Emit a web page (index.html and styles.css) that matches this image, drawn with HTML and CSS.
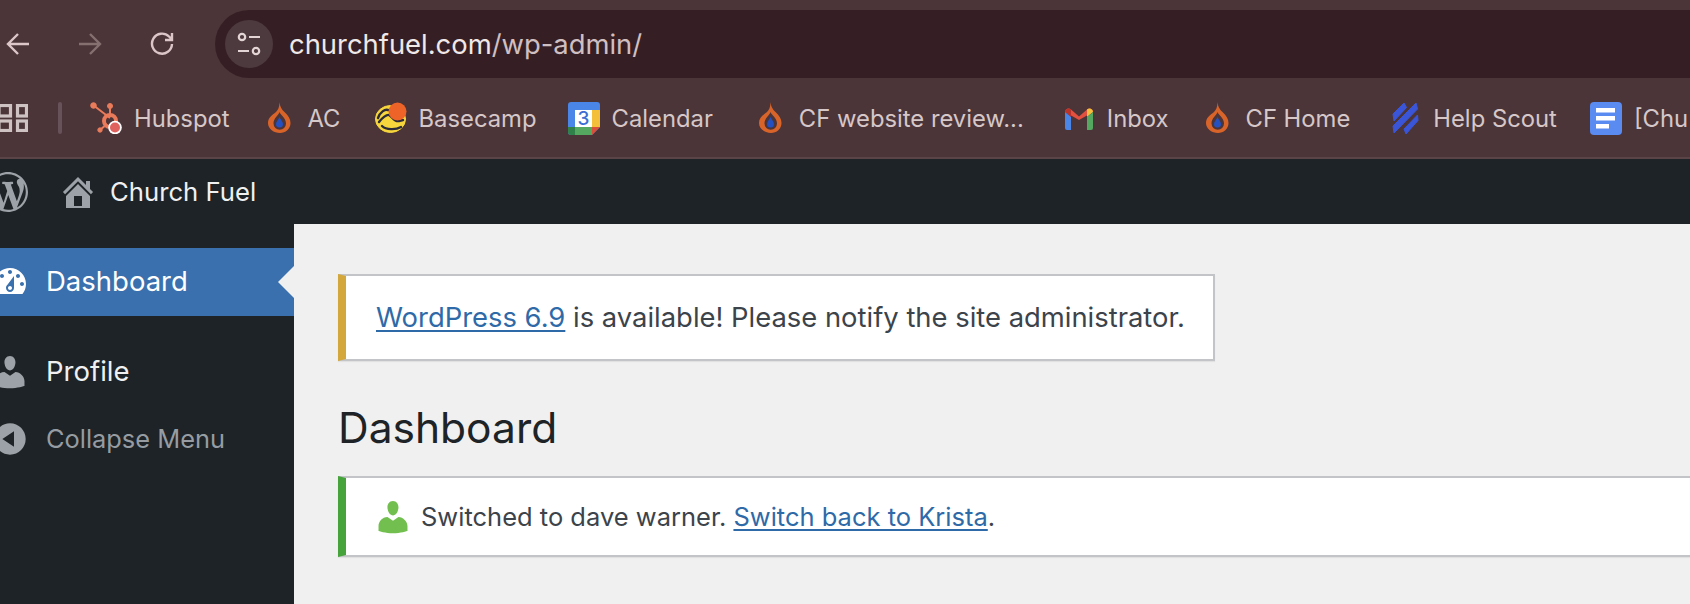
FILE: index.html
```html
<!DOCTYPE html>
<html lang="en">
<head>
  <meta charset="UTF-8" />
  <title>Dashboard - Church Fuel</title>
  <link rel="stylesheet" href="styles.css">
</head>
<body>
  <header class="chrome">
    <div class="toolbar">
      <svg class="nav-icon" width="24" height="24" viewBox="0 0 24 24"><path d="M23 12H2M12 2 2 12l10 10"/></svg>
      <svg class="nav-icon nav-off" width="24" height="24" viewBox="0 0 24 24"><path d="M1 12h21M12 2l10 10-10 10"/></svg>
      <svg class="nav-icon" width="26" height="24" viewBox="0 0 26 24"><path d="M22 12a10 10 0 1 1-3-7.500L22 7.500M22 1v7h-7"/></svg>
      <div class="omnibox">
        <span class="site-chip">
          <svg width="24" height="24" viewBox="0 0 24 24"><circle cx="5" cy="5" r="3.200"/><path d="M12 5h11M1 19h11"/><circle cx="19" cy="19" r="3.200"/></svg>
        </span>
        <span class="url"><span class="url-host">churchfuel.com</span>/wp-admin/</span>
      </div>
    </div>
    <nav class="bookmarks">
      <svg class="apps" width="28" height="28" viewBox="0 0 28 28"><rect x="-1" y="1.500" width="11.500" height="10.500"/><rect x="17.500" y="1.500" width="9" height="10.500"/><rect x="-1" y="17" width="11.500" height="9.500"/><rect x="17.500" y="17" width="9" height="9.500"/></svg>
      <span class="divider"></span>
      <a class="bm">
        <svg width="32" height="32" viewBox="0 0 32 32"><g fill="#e97b5a" stroke="#e97b5a"><path d="M3 3 20 16M20 4v10M10 28l7-6" stroke-width="2" fill="none"/><circle cx="3.500" cy="3.500" r="2.800"/><circle cx="20" cy="4" r="2.500"/><circle cx="10" cy="28" r="2.200"/><circle cx="20" cy="19" r="6" fill="none" stroke-width="4"/></g><circle cx="25" cy="25.500" r="6.800" fill="#fff"/><circle cx="25" cy="25.500" r="5" fill="#e0625f"/></svg>
        Hubspot
      </a>
      <a class="bm">
        <svg class="flame" width="32" height="32" viewBox="0 0 32 32"><use href="#flame"/></svg>
        AC
      </a>
      <a class="bm">
        <svg width="32" height="32" viewBox="0 0 32 32"><ellipse cx="15.500" cy="17" rx="15" ry="13.500" fill="#f6d63c" stroke="#f6d63c"/><path d="M3 16c2-6 7-9 10-8M4 20c3-4 8-8 10-7 3 1 5 7 10 6l4-1M7 24c4 4 14 4 19 1" fill="none" stroke="#2b2b3a" stroke-width="2.400" stroke-linecap="round"/><circle cx="22.500" cy="9.500" r="9" fill="#ee6428"/></svg>
        Basecamp
      </a>
      <a class="bm bm-tight">
        <svg width="32" height="33" viewBox="0 0 32 33"><path d="M3 0h26a3 3 0 0 1 3 3v22l-8 8H3a3 3 0 0 1-3-3V3a3 3 0 0 1 3-3z" fill="#4a86e8"/><path d="M24 8h8v17h-8z" fill="#f4bf3a"/><path d="M7 25h17v8H7z" fill="#54a860"/><path d="M0 25h7v8H3a3 3 0 0 1-3-3z" fill="#2f8049"/><path d="M24 25h8l-8 8z" fill="#d9503a"/><path d="M7 8h17v17H7z" fill="#fff"/><text class="cal-day" x="15.500" y="23">3</text></svg>
        Calendar
      </a>
      <a class="bm bm-wider">
        <svg class="flame" width="32" height="32" viewBox="0 0 32 32"><use href="#flame"/></svg>
        CF website review...
      </a>
      <a class="bm bm-wide">
        <svg width="32" height="32" viewBox="0 0 32 32"><path d="M2 10a3.500 3.500 0 0 1 6-2.500l8 7 8-7a3.500 3.500 0 0 1 6 2.500L16 18z" fill="#e4503f"/><path d="M2 10a3.500 3.500 0 0 1 6-2.500V15z" fill="#b9352c"/><path d="M24 7.500a3.500 3.500 0 0 1 6 2.500l-6 5z" fill="#f4bf3a"/><path d="M2 10l6 5v13H4a2 2 0 0 1-2-2z" fill="#4a86e8"/><path d="M30 10l-6 5v13h4a2 2 0 0 0 2-2z" fill="#54a860"/></svg>
        Inbox
      </a>
      <a class="bm bm-snug">
        <svg class="flame" width="32" height="32" viewBox="0 0 32 32"><use href="#flame"/></svg>
        CF Home
      </a>
      <a class="bm bm-wide">
        <svg width="32" height="32" viewBox="0 0 32 32"><g fill="#3a55d8" stroke="#3a55d8" stroke-linejoin="round"><path d="M4 12 15 1l2.500 4.500L5 19z"/><path d="M4 24 27 1l1.500 6L5 31z"/><path d="M28.500 13l.5 5.500L17 32l-2-5z"/></g></svg>
        Help Scout
      </a>
      <a class="bm bm-snug">
        <svg width="32" height="33" viewBox="0 0 32 33"><rect width="32" height="33" rx="4" fill="#5a8bf0"/><path d="M6 6h19v4.500H6zM6 14h19v4.500H6zM6 22h13v4.500H6z" fill="#fff"/></svg>
        [Chu
      </a>
    </nav>
    <svg class="defs" width="0" height="0">
      <symbol id="flame" viewBox="0 0 32 32">
        <path d="M15.500 0c.5 5 2 7 5 10 4 4 6 7 6 11 0 6-5 10-10.500 10C10 31 4 27 4 21c0-5 4-8 8-11 2-2 3.500-5 3.500-10z" fill="#d9642a"/>
        <path d="M15.500 10c1 3 6.500 6 6.500 11.500a6.200 6.200 0 0 1-12.500 0c0-5.500 5-8 6-11.500z" fill="#4b3539"/>
        <path d="M15.500 15c.8 2.500 3.500 4.500 3.500 7a3.500 3.500 0 0 1-7 0c0-2.500 2.700-4.500 3.500-7z" fill="#2450c0"/>
      </symbol>
    </svg>
  </header>

  <div class="adminbar">
    <svg class="wp-logo dashicon" viewBox="0 0 20 20"><path d="M20 10c0-5.510-4.490-10-10-10C4.480 0 0 4.490 0 10c0 5.520 4.480 10 10 10 5.510 0 10-4.480 10-10zM7.780 15.370L4.370 6.220c.550-.020 1.170-.080 1.170-.080.500-.060.440-1.130-.060-1.110 0 0-1.450.110-2.370.110-.180 0-.370 0-.580-.010C4.120 2.690 6.870 1.110 10 1.110c2.330 0 4.450.870 6.050 2.340-.680-.110-1.650.390-1.650 1.580 0 .740.450 1.360.900 2.100.350.610.550 1.360.550 2.460 0 1.490-1.400 5-1.400 5l-3.030-8.370c.540-.020.820-.170.820-.170.500-.050.440-1.250-.060-1.220 0 0-1.440.120-2.380.120-.870 0-2.330-.120-2.330-.120-.500-.030-.560 1.200-.060 1.220l.920.080 1.260 3.410zM17.410 10c.240-.640.740-1.870.430-4.250.700 1.290 1.050 2.710 1.050 4.250 0 3.290-1.730 6.240-4.400 7.780.970-2.590 1.940-5.200 2.920-7.780zM6.100 18.090C3.120 16.650 1.110 13.530 1.110 10c0-1.300.230-2.480.720-3.590C3.250 10.300 4.670 14.200 6.100 18.090zm4.030-6.630l2.580 6.980c-.860.290-1.760.450-2.710.450-.790 0-1.570-.110-2.290-.330.810-2.380 1.620-4.740 2.420-7.100z"/></svg>
    <svg class="dashicon home-icon" viewBox="0 0 20 20"><path d="M16 8.500l1.530 1.530-1.060 1.060L10 4.620l-6.470 6.470-1.060-1.060L10 2.500l4 4v-2h2v4zm-6-2.460l6 5.990V18H4v-5.970zM12 17v-5H8v5h4z"/></svg>
    <span class="site-name">Church Fuel</span>
  </div>

  <div class="wp-body">
    <aside class="sidebar">
      <a class="menu-item current">
        <svg class="dashicon" viewBox="0 0 20 20"><path d="M3.760 16h12.480c1.100-1.370 1.760-3.110 1.760-5 0-4.420-3.580-8-8-8s-8 3.580-8 8c0 1.890.660 3.630 1.760 5zM10 4c.550 0 1 .450 1 1s-.450 1-1 1-1-.450-1-1 .450-1 1-1zM6 6c.550 0 1 .450 1 1s-.450 1-1 1-1-.450-1-1 .450-1 1-1zm8 0c.550 0 1 .450 1 1s-.450 1-1 1-1-.450-1-1 .450-1 1-1zm-5.370 5.550L12 7v6c0 1.100-.900 2-2 2s-2-.900-2-2c0-.570.240-1.080.630-1.450zM4 10c.550 0 1 .450 1 1s-.450 1-1 1-1-.450-1-1 .450-1 1-1zm12 0c.550 0 1 .450 1 1s-.450 1-1 1-1-.450-1-1 .450-1 1-1zm-5 3c0-.550-.450-1-1-1s-1 .450-1 1 .450 1 1 1 1-.450 1-1z"/></svg>
        <span class="menu-label">Dashboard</span>
      </a>
      <a class="menu-item profile">
        <svg class="dashicon" viewBox="0 0 20 20"><path d="M10 9.250c-2.270 0-2.730-3.440-2.730-3.440C7 4.020 7.820 2 9.970 2c2.160 0 2.980 2.020 2.710 3.810 0 0-.410 3.440-2.680 3.440zm0 2.570L12.720 10c2.390 0 4.520 2.330 4.520 4.530v2.490s-3.650 1.130-7.240 1.130c-3.650 0-7.240-1.130-7.240-1.130v-2.490c0-2.250 1.940-4.480 4.470-4.480z"/></svg>
        <span class="menu-label">Profile</span>
      </a>
      <a class="menu-item collapse">
        <svg class="dashicon" viewBox="0 0 20 20"><path d="M10 2.160c4.330 0 7.840 3.510 7.840 7.840s-3.510 7.840-7.840 7.840S2.160 14.330 2.160 10 5.710 2.160 10 2.160zm2 11.720V6.120L6.180 9.970z"/></svg>
        <span class="menu-label">Collapse Menu</span>
      </a>
    </aside>

    <main class="content">
      <div class="notice notice-warning">
        <a href="#">WordPress 6.9</a> is available! Please notify the site administrator.
      </div>
      <h1>Dashboard</h1>
      <div class="notice notice-success">
        <svg class="dashicon switch-icon" viewBox="0 0 20 20"><path d="M10 9.250c-2.270 0-2.730-3.440-2.730-3.440C7 4.020 7.820 2 9.970 2c2.160 0 2.980 2.020 2.710 3.810 0 0-.410 3.440-2.680 3.440zm0 2.570L12.720 10c2.390 0 4.520 2.330 4.520 4.530v2.490s-3.650 1.130-7.240 1.130c-3.650 0-7.240-1.130-7.240-1.130v-2.490c0-2.250 1.940-4.480 4.470-4.480z"/></svg>
        <span>Switched to dave warner. <a href="#">Switch back to Krista</a>.</span>
      </div>
    </main>
  </div>
</body>
</html>
```

FILE: styles.css
```css
:root {
  --chrome: #4b3539;
  --chrome-dark: #351f24;
  --chrome-text: #d6c7c8;
  --wp-dark: #1d2327;
  --wp-icon: #9ca2a7;
  --wp-blue: #3a70ad;
  --wp-bg: #f0f0f1;
  --link: #2f6aa8;
  --text: #3c434a;
}

* {
  box-sizing: border-box;
}

body {
  margin: 0;
  height: 604px;
  overflow: hidden;
  display: flex;
  flex-direction: column;
  font-family: Inter, "Liberation Sans", sans-serif;
  background-color: var(--wp-bg);
}

.chrome {
  background-color: var(--chrome);
  border-bottom: 2px solid #5a4448;
  height: 159px;
  padding-top: 10px;
  flex-shrink: 0;
}

.toolbar {
  display: flex;
  align-items: center;
  height: 68px;
}

.nav-icon {
  margin-left: 6px;
  margin-right: 42px;
  fill: none;
  stroke: #dcc6c8;
  stroke-width: 2.400;
  flex-shrink: 0;
}

.nav-icon.nav-off {
  stroke: #86706f;
}

.omnibox {
  display: flex;
  align-items: center;
  flex: 1;
  height: 68px;
  margin-left: -3px;
  margin-right: -60px;
  padding-left: 10px;
  background-color: var(--chrome-dark);
  border-radius: 34px;
}

.site-chip {
  width: 48px;
  height: 48px;
  border-radius: 50%;
  background-color: #4d3a3e;
  display: flex;
  align-items: center;
  justify-content: center;
  flex-shrink: 0;
}

.site-chip svg {
  fill: none;
  stroke: #e3d5d6;
  stroke-width: 2.200;
}

.url {
  margin-left: 16px;
  font-size: 27.400px;
  color: #d0bfc1;
}

.url-host {
  color: #f1e8e8;
}

.bookmarks {
  display: flex;
  align-items: center;
  gap: 34px;
  height: 60px;
  margin-top: 10px;
  white-space: nowrap;
  overflow: hidden;
  font-size: 23.800px;
  color: var(--chrome-text);
}

.apps {
  fill: none;
  stroke: #cfc2c3;
  stroke-width: 3.200;
  flex-shrink: 0;
}

.divider {
  width: 4px;
  height: 32px;
  margin-left: -4px;
  border-radius: 2px;
  background-color: #67525a;
  flex-shrink: 0;
}

.divider + .bm {
  margin-left: -6px;
}

.bm {
  display: flex;
  align-items: center;
  gap: 12px;
  flex-shrink: 0;
}

.bm-tight {
  margin-left: -3px;
}

.bm-snug {
  margin-left: -1px;
}

.bm-wide {
  margin-left: 5px;
}

.bm-wider {
  margin-left: 8px;
}

.cal-day {
  font-family: Inter, sans-serif;
  font-size: 19px;
  font-weight: 500;
  fill: #3b6fd4;
  text-anchor: middle;
}

.defs {
  position: absolute;
}

.adminbar {
  display: flex;
  align-items: center;
  height: 65px;
  flex-shrink: 0;
  background-color: var(--wp-dark);
  color: #f0f0f1;
  font-size: 25.700px;
}

.dashicon {
  width: 40px;
  height: 40px;
  flex-shrink: 0;
  fill: var(--wp-icon);
}

.wp-logo {
  margin-left: -12px;
}

.home-icon {
  margin-left: 30px;
}

.site-name {
  margin-left: 12px;
}

.wp-body {
  display: flex;
  flex: 1;
  min-height: 0;
}

.sidebar {
  width: 294px;
  flex-shrink: 0;
  padding-top: 24px;
  background-color: var(--wp-dark);
}

.menu-item {
  display: flex;
  align-items: center;
  gap: 16px;
  height: 64px;
  font-size: 27.500px;
  color: #f0f0f1;
}

.menu-label {
  margin-bottom: 2px;
}

.menu-item .dashicon {
  margin-left: -10px;
}

.menu-item.current {
  position: relative;
  height: 68px;
  background-color: var(--wp-blue);
  color: #fff;
}

.menu-item.current .dashicon {
  fill: #fff;
}

.menu-item.current::after {
  content: "";
  position: absolute;
  right: 0;
  top: 18px;
  border: 16px solid transparent;
  border-right-color: var(--wp-bg);
  border-left-width: 0;
}

.menu-item.profile {
  margin-top: 24px;
}

.menu-item.collapse {
  margin-top: 3px;
  font-size: 25.400px;
  color: #969ca1;
}

.content {
  flex: 1;
  min-width: 0;
  padding: 50px 0 0 44px;
  background-color: var(--wp-bg);
}

.notice {
  background-color: #fff;
  border: 2px solid #c3c4c7;
  box-shadow: 0 1px 1px rgba(0,0,0,0.06);
  color: var(--text);
}

.notice a {
  color: var(--link);
  text-decoration: underline;
  text-underline-offset: 3px;
}

.notice-warning {
  display: table;
  height: 87px;
  line-height: 83px;
  padding: 0 28px 0 30px;
  font-size: 27.400px;
  border-left: 8px solid #d4a73c;
}

.notice-success {
  display: flex;
  align-items: center;
  gap: 8px;
  height: 81px;
  margin-right: -10px;
  padding-left: 27px;
  font-size: 25.500px;
  border-left: 8px solid #46a33c;
}

.switch-icon {
  fill: #72bf4f;
}

h1 {
  margin: 0;
  padding: 40px 0 21px;
  font-size: 42.500px;
  line-height: 54px;
  font-weight: 400;
  color: var(--wp-dark);
}
```
